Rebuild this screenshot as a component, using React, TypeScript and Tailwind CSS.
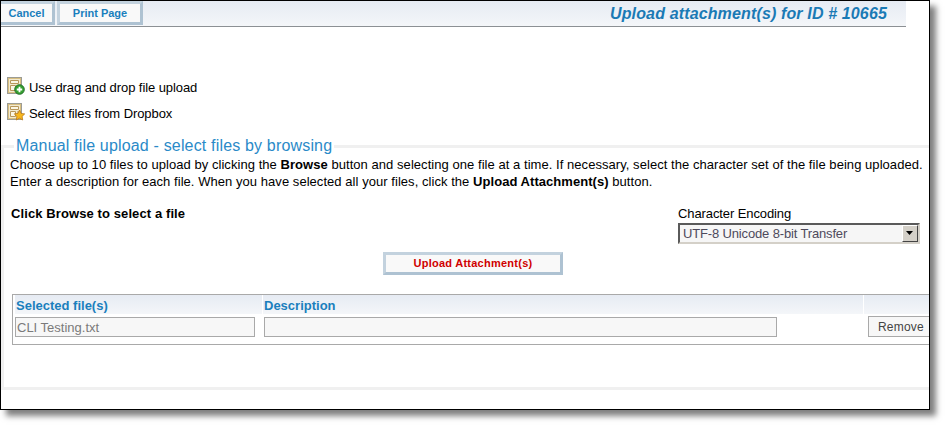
const font = "font-['Liberation_Sans',Arial,sans-serif]"

function DocIcon({ badge }: { badge: 'plus' | 'star' }) {
  return (
    <svg width="18" height="18" viewBox="0 0 18 18" className="shrink-0">
      <rect x="0.5" y="0.5" width="14" height="16" fill="#f2ead0" stroke="#9c9c94" />
      <rect x="1.5" y="1.5" width="12" height="14" fill="none" stroke="#d9bf80" />
      <path d="M3.5 3.5h8v3h-8z" fill="#fbf6e4" stroke="#b8975a" />
      <path d="M3.5 8.5h5v5h-5z" fill="#fbf6e4" stroke="#b8975a" />
      <path d="M10 9h2M10 11h2" stroke="#b8975a" />
      {badge === 'plus' ? (
        <g>
          <circle cx="12.5" cy="12.5" r="4.8" fill="#36a030" stroke="#24702a" />
          <path d="M12.5 9.8v5.4M9.8 12.5h5.4" stroke="#fff" strokeWidth="1.8" />
        </g>
      ) : (
        <path
          d="M12.5 7l1.6 3.4 3.6.5-2.6 2.5.6 3.6-3.2-1.8-3.2 1.8.6-3.6-2.6-2.5 3.6-.5z"
          fill="#f7b71c"
          stroke="#b9791a"
          strokeWidth="0.8"
        />
      )}
    </svg>
  )
}

function ToolbarButton({ label, className }: { label: string; className: string }) {
  return (
    <button
      className={`h-[24px] border-[3px] border-t-[#c3d2de] border-l-[#c3d2de] border-r-[#aec2d2] border-b-[#aec2d2] bg-[#f9f9f9] text-[11px] font-bold text-[#1a7fbd] ${className}`}
    >
      {label}
    </button>
  )
}

export default function App() {
  return (
    <div className={`w-[946px] h-[426px] bg-white overflow-hidden ${font}`}>
      <div className="w-[930px] h-[410px] border border-black bg-white overflow-hidden shadow-[6px_6px_6px_rgba(0,0,0,0.5)]">
        {/* Toolbar */}
        <div className="w-[905px] h-[26px] flex items-center justify-between border-b border-[#8c9094] bg-gradient-to-b from-[#e6ebf3] to-[#f4f6f9]">
          <div className="flex items-start h-full gap-[2px]">
            <ToolbarButton label="Cancel" className="w-[54px] border-l-0" />
            <ToolbarButton label="Print Page" className="w-[86px]" />
          </div>
          <span className="pr-[19px] text-[16px] font-bold italic tracking-[0.14px] text-[#1a7ab5]">
            Upload attachment(s) for ID # 10665
          </span>
        </div>

        {/* Alternate upload options */}
        <div className="mt-[50px] ml-[6px] flex flex-col gap-[8px] text-[13px] tracking-[-0.08px] text-black">
          <div className="flex items-center gap-[4px] h-[18px]">
            <DocIcon badge="plus" />
            <span className="mt-[4px]">Use drag and drop file upload</span>
          </div>
          <div className="flex items-center gap-[4px] h-[18px]">
            <DocIcon badge="star" />
            <span className="mt-[4px]">Select files from Dropbox</span>
          </div>
        </div>

        {/* Manual upload */}
        <fieldset className="mt-[16px] w-[960px] h-[253px] border-[3px] border-r-0 border-[#f0f0f0]">
          <legend className="ml-[10px] px-[2px] text-[16px] tracking-[0.17px] leading-[18px] text-[#2a8ac8]">
            Manual file upload - select files by browsing
          </legend>
          <p className="mt-[1px] pl-[6px] text-[13px] tracking-[0.05px] leading-[17px] text-black whitespace-nowrap">
            Choose up to 10 files to upload by clicking the <b>Browse</b> button and selecting one file at a time. If necessary, select the character set of the file being uploaded.
            <br />
            Enter a description for each file. When you have selected all your files, click the <b>Upload Attachment(s)</b> button.
          </p>

          <div className="mt-[16px] flex justify-between w-[916px] pl-[7px]">
            <span className="text-[13px] font-bold tracking-[0.1px] text-black leading-[16px]">Click Browse to select a file</span>
            <div className="flex flex-col">
              <span className="text-[13px] tracking-[-0.1px] leading-[15px] text-black">Character Encoding</span>
              <div className="mt-[2px] w-[242px] h-[21px] flex items-center justify-between border-2 border-t-[#5a5a5a] border-l-[#5a5a5a] border-r-[#d4d0c8] border-b-[#d4d0c8] bg-[#f6f6f6]">
                <span className="pl-[3px] text-[13px] tracking-[-0.15px] text-[#4e4a5c]">UTF-8 Unicode 8-bit Transfer</span>
                <span className="w-[16px] h-[17px] flex items-center justify-center border border-t-white border-l-white border-r-[#444] border-b-[#444] bg-[#d4d0c8]">
                  <svg width="8" height="5" viewBox="0 0 8 5">
                    <path d="M0 0h7L3.5 4z" fill="#000" />
                  </svg>
                </span>
              </div>
            </div>
          </div>

          <div className="mt-[8px] flex justify-center w-[938px]">
            <button className="w-[180px] h-[23px] border-[3px] border-t-[#c3d2de] border-l-[#c3d2de] border-r-[#aec2d2] border-b-[#aec2d2] bg-[#f9f9f9] text-[11px] tracking-[0.25px] font-bold text-[#d00000]">
              Upload Attachment(s)
            </button>
          </div>

          {/* Selected files table */}
          <div className="mt-[19px] ml-[8px] w-[960px] border border-r-0 border-[#a9a9a9] px-[2px] pb-[7px]">
            <div className="flex gap-[1px] h-[19px] text-[13px] font-bold text-[#1a7fbd]">
              <div className="w-[247px] pl-[1px] leading-[21px] bg-gradient-to-b from-[#e6ebf3] to-[#f4f6f9]">Selected file(s)</div>
              <div className="w-[600px] pl-[1px] leading-[21px] bg-gradient-to-b from-[#e6ebf3] to-[#f4f6f9]">Description</div>
              <div className="flex-1 bg-gradient-to-b from-[#e6ebf3] to-[#f4f6f9]" />
            </div>
            <div className="flex items-start mt-[3px]">
              <div className="w-[240px] h-[20px] border border-[#a9a9a9] bg-[#f7f7f7] pl-[1px] text-[13px] leading-[19px] text-[#7a7a7a]">CLI Testing.txt</div>
              <div className="ml-[9px] w-[513px] h-[20px] border border-[#a9a9a9] bg-[#f7f7f7]" />
              <button className="ml-[91px] mt-[-1px] w-[70px] h-[21px] border border-[#a9a9a9] bg-[#f7f7f7] pl-[9px] text-left text-[12px] tracking-[0.2px] text-[#444]">Remove</button>
            </div>
          </div>
        </fieldset>
      </div>
    </div>
  )
}
